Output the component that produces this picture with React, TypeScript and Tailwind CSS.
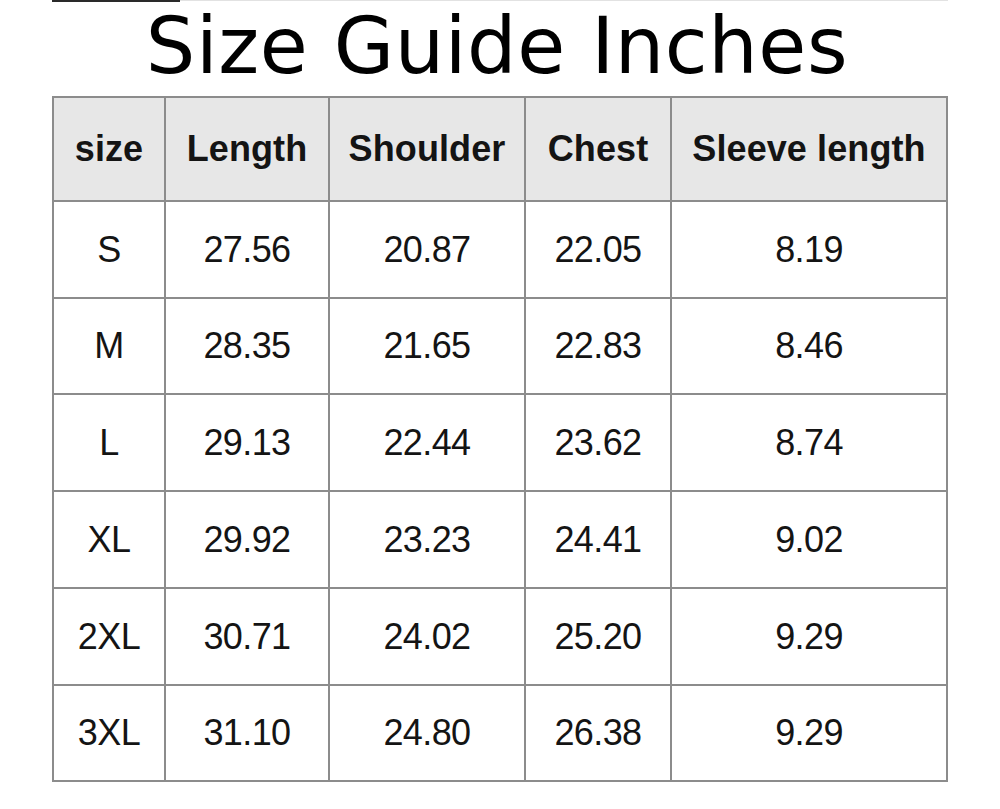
import React from 'react';

const headers = ['size', 'Length', 'Shoulder', 'Chest', 'Sleeve length'];

const rows: string[][] = [
    ['S', '27.56', '20.87', '22.05', '8.19'],
    ['M', '28.35', '21.65', '22.83', '8.46'],
    ['L', '29.13', '22.44', '23.62', '8.74'],
    ['XL', '29.92', '23.23', '24.41', '9.02'],
    ['2XL', '30.71', '24.02', '25.20', '9.29'],
    ['3XL', '31.10', '24.80', '26.38', '9.29'],
];

const App: React.FC = () => {
    return (
        <div className="w-[1000px] h-[809px] bg-white overflow-hidden">
            {/* top tab line */}
            <div className="flex ml-[52px] w-[896px]">
                <div className="w-[128px] h-[2px] bg-[#2a2a2a]" />
                <div className="flex-1 h-px bg-[#e2e2e2]" />
            </div>

            {/* Title */}
            <h1
                className="h-[94px] flex items-center justify-center text-[78px] leading-none text-black tracking-[0.6px] pb-[6px] pr-[6px]"
                style={{ fontFamily: '"DejaVu Sans", sans-serif' }}
            >
                Size Guide Inches
            </h1>

            {/* Table */}
            <div
                className="ml-[52px] w-[896px] grid grid-cols-[110px_162px_194px_144px_274px] grid-rows-[102px_95px_94px_95px_95px_95px_94px] gap-[2px] p-[2px] bg-[#8c8c8c] text-[#141414]"
                style={{ fontFamily: '"Liberation Sans", Arial, sans-serif' }}
            >
                {headers.map((h) => (
                    <div
                        key={h}
                        className="bg-[#e7e7e7] flex items-center justify-center text-[36px] font-bold tracking-[0.1px]"
                    >
                        {h}
                    </div>
                ))}
                {rows.map((r) =>
                    r.map((c, i) => (
                        <div
                            key={r[0] + i}
                            className="bg-white flex items-center justify-center text-[36px] tracking-[-0.6px]"
                        >
                            {c}
                        </div>
                    ))
                )}
            </div>
        </div>
    );
};

export default App;
